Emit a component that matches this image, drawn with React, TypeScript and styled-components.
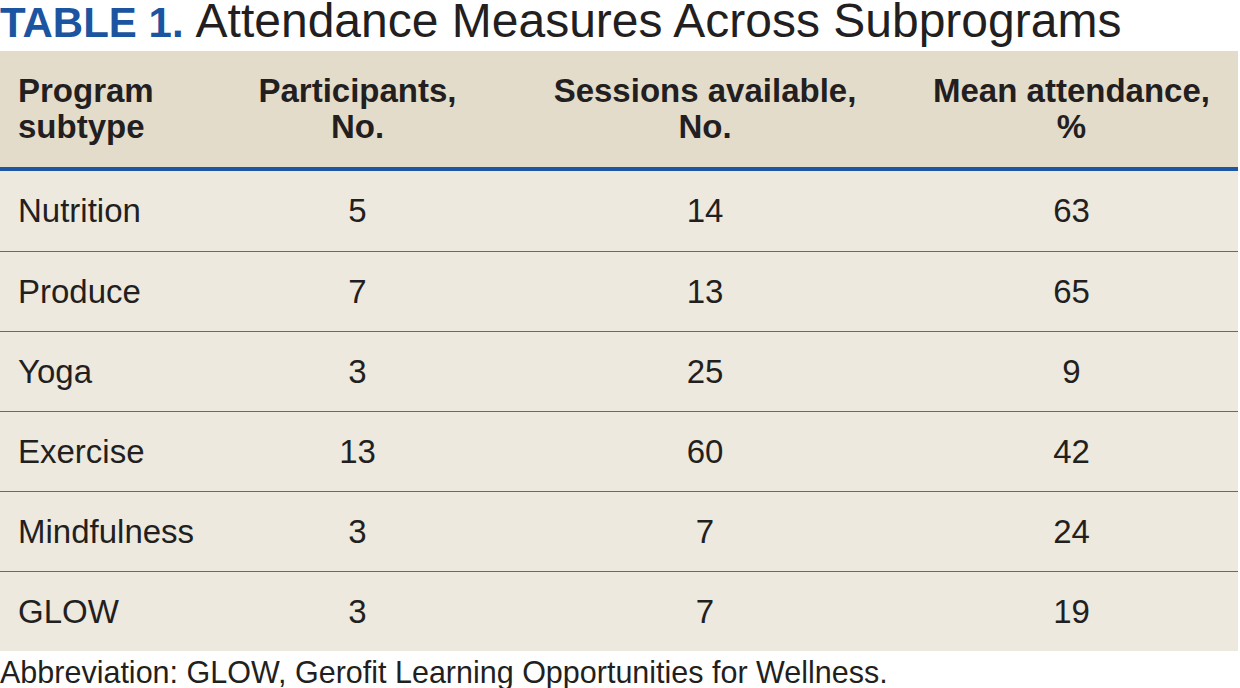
import React from 'react'
import styled, { createGlobalStyle } from 'styled-components'

const GlobalStyle = createGlobalStyle`
  html, body {
    margin: 0;
    padding: 0;
    background: #fff;
  }
  body {
    font-family: 'Liberation Sans', Arial, sans-serif;
    color: #231f20;
  }
`

const Page = styled.div`
  width: 1240px;
  height: 688px;
  overflow: hidden;
`

const Title = styled.h1`
  margin: 0 0 9px;
  height: 42px;
  font-size: 48px;
  line-height: 42px;
  font-weight: 400;
  color: #231f20;
  white-space: nowrap;
`

const Label = styled.span`
  font-size: 42px;
  font-weight: 700;
  color: #1b54a0;
  margin-right: 12px;
`

const Table = styled.table`
  width: 1238px;
  border-collapse: collapse;
  table-layout: fixed;
`

const HeadRow = styled.tr`
  background: #e3dccb;
  border-bottom: 4px solid #1d56a3;
`

const Th = styled.th<{ $left?: boolean }>`
  height: 116px;
  padding: 0 0 0 ${(p) => (p.$left ? '18px' : '0')};
  font-size: 33px;
  line-height: 36px;
  font-weight: 700;
  text-align: ${(p) => (p.$left ? 'left' : 'center')};
  vertical-align: middle;
  color: #231f20;
`

const BodyRow = styled.tr`
  background: #ede9df;
  border-top: 1px solid #6b6a66;
  &:first-child {
    border-top: none;
  }
  &:first-child td {
    height: 80px;
  }
`

const Td = styled.td<{ $left?: boolean }>`
  height: 79px;
  padding: 0 0 0 ${(p) => (p.$left ? '18px' : '0')};
  font-size: 33px;
  text-align: ${(p) => (p.$left ? 'left' : 'center')};
  vertical-align: middle;
  color: #231f20;
`

const Note = styled.p`
  margin: 6px 0 0;
  font-size: 30.5px;
  line-height: 30px;
  white-space: nowrap;
`

const rows: [string, number, number, number][] = [
  ['Nutrition', 5, 14, 63],
  ['Produce', 7, 13, 65],
  ['Yoga', 3, 25, 9],
  ['Exercise', 13, 60, 42],
  ['Mindfulness', 3, 7, 24],
  ['GLOW', 3, 7, 19],
]

export default function App() {
  return (
    <Page>
      <GlobalStyle />
      <Title>
        <Label>TABLE 1.</Label>Attendance Measures Across Subprograms
      </Title>
      <Table>
        <colgroup>
          <col style={{ width: 210 }} />
          <col style={{ width: 295 }} />
          <col style={{ width: 400 }} />
          <col style={{ width: 333 }} />
        </colgroup>
        <thead>
          <HeadRow>
            <Th $left>
              Program
              <br />
              subtype
            </Th>
            <Th>
              Participants,
              <br />
              No.
            </Th>
            <Th>
              Sessions available,
              <br />
              No.
            </Th>
            <Th>
              Mean attendance,
              <br />%
            </Th>
          </HeadRow>
        </thead>
        <tbody>
          {rows.map(([name, p, s, m]) => (
            <BodyRow key={name}>
              <Td $left>{name}</Td>
              <Td>{p}</Td>
              <Td>{s}</Td>
              <Td>{m}</Td>
            </BodyRow>
          ))}
        </tbody>
      </Table>
      <Note>Abbreviation: GLOW, Gerofit Learning Opportunities for Wellness.</Note>
    </Page>
  )
}
